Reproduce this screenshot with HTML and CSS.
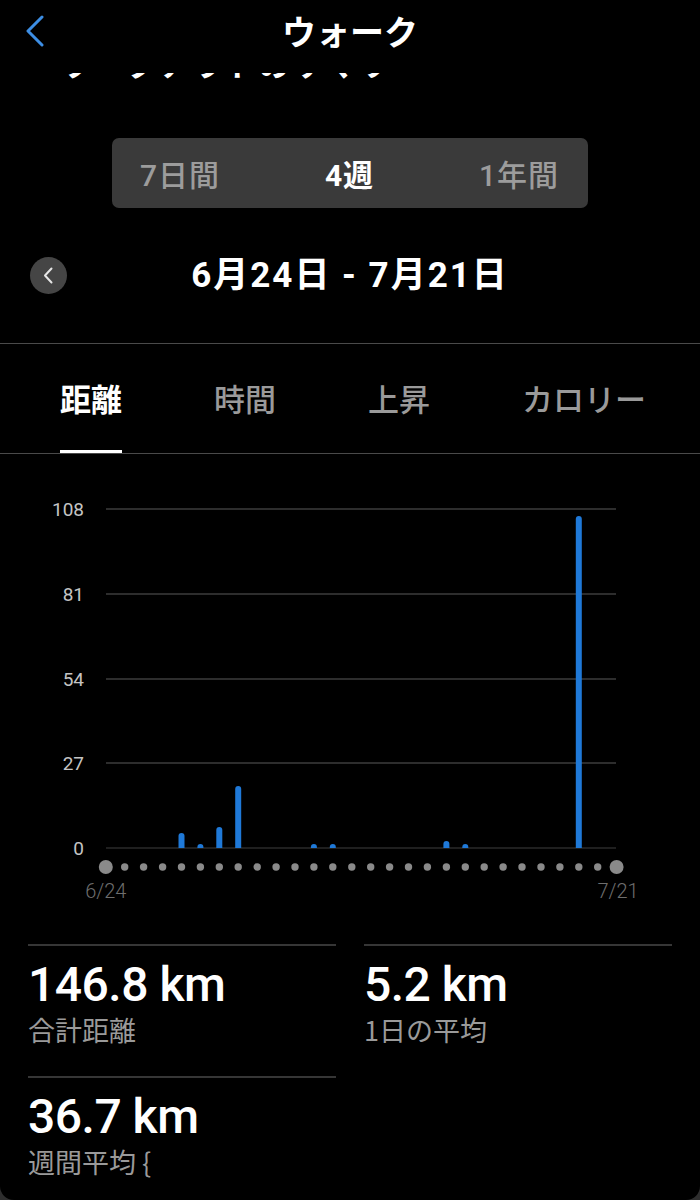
FILE: index.html
```html
<!DOCTYPE html>
<html lang="ja">
<head>
    <meta charset="UTF-8">
    <meta name="viewport" content="width=device-width, initial-scale=1.0">
    <title>ウォーク</title>
    <link rel="stylesheet" href="styles.css">
</head>
<body>
    <div class="screen">
        <div class="nav">
            <div class="nav-left">
                <svg class="nav-back" width="20" height="32" viewBox="0 0 20 32">
                    <path d="M17 2 L3 16 L17 30" fill="none" stroke="#3d8ee4" stroke-width="3" stroke-linecap="round" stroke-linejoin="round"/>
                </svg>
            </div>
            <div class="nav-title">ウォーク</div>
            <div></div>
        </div>

        <!-- 上にスクロールして隠れた見出し -->
        <div class="ghost"><span>ワークアウトのサマリー</span></div>

        <div class="segmented">
            <span class="seg">7日間</span>
            <span class="seg seg-active">4週</span>
            <span class="seg">1年間</span>
        </div>

        <div class="range">
            <div class="range-left">
                <button class="range-prev">
                    <svg width="37" height="37" viewBox="0 0 37 37">
                        <path d="M21.5 11.5 L15 18.5 L21.5 25.5" fill="none" stroke="#e6e6e6" stroke-width="2" stroke-linecap="round" stroke-linejoin="round"/>
                    </svg>
                </button>
            </div>
            <div class="range-text">6月24日 - 7月21日</div>
            <div></div>
        </div>

        <div class="divider"></div>

        <div class="tabs">
            <div class="tab tab-active">距離</div>
            <div class="tab">時間</div>
            <div class="tab">上昇</div>
            <div class="tab">カロリー</div>
        </div>

        <div class="divider"></div>

        <svg class="chart" width="700" height="456" viewBox="0 0 700 456">
            <g class="grid">
                <line x1="106" y1="55" x2="616" y2="55"/>
                <line x1="106" y1="140" x2="616" y2="140"/>
                <line x1="106" y1="225" x2="616" y2="225"/>
                <line x1="106" y1="309" x2="616" y2="309"/>
            </g>
            <line class="baseline" x1="106" y1="394" x2="616" y2="394"/>
            <g class="y-labels">
                <text x="84" y="55">108</text>
                <text x="84" y="140">81</text>
                <text x="84" y="225">54</text>
                <text x="84" y="309">27</text>
                <text x="84" y="394">0</text>
            </g>
            <g class="bars">
                <path d="M178.5 394 V382 A3 3 0 0 1 184.5 382 V394 Z"/>
                <path d="M197.4 394 V393 A3 3 0 0 1 203.4 393 V394 Z"/>
                <path d="M216.3 394 V376 A3 3 0 0 1 222.3 376 V394 Z"/>
                <path d="M235.2 394 V335 A3 3 0 0 1 241.2 335 V394 Z"/>
                <path d="M310.9 394 V393 A3 3 0 0 1 316.9 393 V394 Z"/>
                <path d="M329.8 394 V393 A3 3 0 0 1 335.8 393 V394 Z"/>
                <path d="M443.4 394 V390 A3 3 0 0 1 449.4 390 V394 Z"/>
                <path d="M462.3 394 V393 A3 3 0 0 1 468.3 393 V394 Z"/>
                <path d="M575.8 394 V65 A3 3 0 0 1 581.8 65 V394 Z"/>
            </g>
            <g class="dots">
                <circle cx="105.8" cy="413" r="7"/>
                <circle cx="124.7" cy="413" r="3.7"/>
                <circle cx="143.6" cy="413" r="3.7"/>
                <circle cx="162.6" cy="413" r="3.7"/>
                <circle cx="181.5" cy="413" r="3.7"/>
                <circle cx="200.4" cy="413" r="3.7"/>
                <circle cx="219.3" cy="413" r="3.7"/>
                <circle cx="238.2" cy="413" r="3.7"/>
                <circle cx="257.2" cy="413" r="3.7"/>
                <circle cx="276.1" cy="413" r="3.7"/>
                <circle cx="295.0" cy="413" r="3.7"/>
                <circle cx="313.9" cy="413" r="3.7"/>
                <circle cx="332.8" cy="413" r="3.7"/>
                <circle cx="351.8" cy="413" r="3.7"/>
                <circle cx="370.7" cy="413" r="3.7"/>
                <circle cx="389.6" cy="413" r="3.7"/>
                <circle cx="408.5" cy="413" r="3.7"/>
                <circle cx="427.4" cy="413" r="3.7"/>
                <circle cx="446.4" cy="413" r="3.7"/>
                <circle cx="465.3" cy="413" r="3.7"/>
                <circle cx="484.2" cy="413" r="3.7"/>
                <circle cx="503.1" cy="413" r="3.7"/>
                <circle cx="522.0" cy="413" r="3.7"/>
                <circle cx="541.0" cy="413" r="3.7"/>
                <circle cx="559.9" cy="413" r="3.7"/>
                <circle cx="578.8" cy="413" r="3.7"/>
                <circle cx="597.7" cy="413" r="3.7"/>
                <circle cx="616.6" cy="413" r="7"/>
            </g>
            <g class="x-labels">
                <text x="105.8" y="437">6/24</text>
                <text x="618" y="437">7/21</text>
            </g>
        </svg>

        <div class="stats">
            <div class="stat">
                <div class="stat-value">146.8 km</div>
                <div class="stat-label">合計距離</div>
            </div>
            <div class="stat">
                <div class="stat-value">5.2 km</div>
                <div class="stat-label">1日の平均</div>
            </div>
            <div class="stat">
                <div class="stat-value">36.7 km</div>
                <div class="stat-label">週間平均 {</div>
            </div>
        </div>
    </div>
</body>
</html>
```

FILE: styles.css
```css
body {
    margin: 0;
    padding: 0;
    background-color: #2e2e2e;
    color: #fff;
    font-family: Roboto, "Noto Sans CJK JP", sans-serif;
}
.screen {
    width: 700px;
    height: 1200px;
    background-color: #000;
    overflow: hidden;
    border-radius: 0 0 14px 14px;
}
.nav {
    display: grid;
    grid-template-columns: 1fr auto 1fr;
    align-items: center;
    height: 62px;
}
.nav-left {
    padding-left: 25px;
    display: flex;
    align-items: center;
}
.nav-title {
    font-family: "Noto Sans CJK JP", sans-serif;
    font-size: 34px;
    font-weight: 700;
    line-height: 40px;
}
.ghost {
    margin-top: 11px;
    height: 7px;
    overflow: hidden;
    padding-left: 60px;
}
.ghost span {
    display: block;
    margin-top: -14px;
    font-family: "Noto Sans CJK JP", sans-serif;
    font-size: 32px;
    font-weight: 700;
    line-height: 7px;
    letter-spacing: 1px;
    white-space: nowrap;
}
.segmented {
    margin: 58px auto 0;
    width: 476px;
    height: 70px;
    box-sizing: border-box;
    padding: 0 29px 0 28px;
    background-color: #3a3a3a;
    border-radius: 7px;
    display: flex;
    justify-content: space-between;
    align-items: center;
}
.seg {
    font-size: 30px;
    color: #9c9c9c;
    font-weight: 500;
    letter-spacing: 1px;
}
.seg-active {
    color: #fff;
    font-weight: 700;
}
.range {
    margin-top: 49px;
    height: 37px;
    display: grid;
    grid-template-columns: 1fr auto 1fr;
    align-items: center;
}
.range-left {
    padding-left: 30px;
    display: flex;
}
.range-prev {
    width: 37px;
    height: 37px;
    padding: 0;
    border: none;
    border-radius: 50%;
    background-color: #454545;
    display: flex;
}
.range-text {
    font-size: 35px;
    font-weight: 700;
    line-height: 37px;
    letter-spacing: 2px;
}
.divider {
    height: 1px;
    background-color: #4a4a4a;
}
.range + .divider {
    margin-top: 49px;
}
.tabs {
    display: flex;
    gap: 92px;
    padding-left: 60px;
    height: 109px;
}
.tab {
    display: flex;
    align-items: center;
    padding-top: 0;
    box-sizing: border-box;
    border-bottom: 3px solid transparent;
    font-family: "Noto Sans CJK JP", sans-serif;
    font-size: 31px;
    font-weight: 500;
    color: #9a9a9a;
}
.tab-active {
    color: #fff;
    font-weight: 700;
    border-bottom-color: #fff;
}
.chart {
    display: block;
}
.grid line {
    stroke: #3d3d3d;
    stroke-width: 1.5;
}
.baseline {
    stroke: #2a2a2a;
    stroke-width: 1.5;
}
.y-labels text {
    fill: #c4c4c4;
    font-family: Roboto, sans-serif;
    font-size: 19px;
    text-anchor: end;
    dominant-baseline: central;
}
.bars path {
    fill: #1f79d8;
}
.dots circle {
    fill: #8a8a8a;
}
.x-labels text {
    fill: #6e6e6e;
    font-family: Roboto, sans-serif;
    font-size: 20px;
    font-weight: 300;
    text-anchor: middle;
    dominant-baseline: central;
}
.stats {
    margin-top: 34px;
    padding: 0 28px;
    display: grid;
    grid-template-columns: 1fr 1fr;
    column-gap: 28px;
    row-gap: 33px;
}
.stat {
    border-top: 2px solid #363636;
    padding-top: 15px;
}
.stat-value {
    font-size: 48px;
    font-weight: 500;
    line-height: 48px;
    letter-spacing: -0.5px;
}
.stat-label {
    margin-top: 7px;
    font-family: "Noto Sans CJK JP", sans-serif;
    font-size: 27px;
    line-height: 27px;
    color: #9a9a9a;
}
```
